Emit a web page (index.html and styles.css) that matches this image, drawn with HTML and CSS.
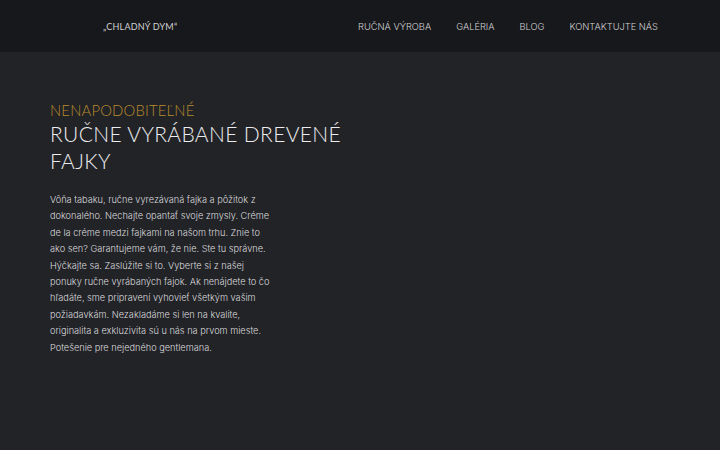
FILE: index.html
```html
<!DOCTYPE html>
<html lang="sk">
<head>
  <meta charset="UTF-8" />
  <meta name="viewport" content="width=device-width, initial-scale=1.0"/>
  <title>Chladný dym</title>
  <link rel="stylesheet" href="styles.css">
</head>
<body>
  <header class="topbar">
    <div class="logo">„CHLADNÝ DYM“</div>
    <nav class="menu">
      <a href="#">Ručná výroba</a>
      <a href="#">Galéria</a>
      <a href="#">Blog</a>
      <a href="#">Kontaktujte nás</a>
    </nav>
  </header>

  <main class="hero">
    <p class="kicker">Nenapodobiteľné</p>
    <h1>Ručne vyrábané drevené fajky</h1>
    <p class="intro">Vôňa tabaku, ručne vyrezávaná fajka a pôžitok z dokonalého. Nechajte opantať svoje zmysly. Créme de la créme medzi fajkami na našom trhu. Znie to ako sen? Garantujeme vám, že nie. Ste tu správne. Hýčkajte sa. Zaslúžite si to. Vyberte si z našej ponuky ručne vyrábaných fajok. Ak nenájdete to čo hľadáte, sme pripravení vyhovieť všetkým vašim požiadavkám. Nezakladáme si len na kvalite, originalita a exkluzivita sú u nás na prvom mieste. Potešenie pre nejedného gentlemana.</p>
  </main>
</body>
</html>
```

FILE: styles.css
```css
body {
  margin: 0;
  padding: 0;
  background: #222327;
  color: #d6d6d8;
  font-family: 'Inter', sans-serif;
  min-height: 450px;
}

.topbar {
  height: 52px;
  background: #17181b;
  display: flex;
  align-items: center;
  justify-content: space-between;
  padding: 0 62px 0 103px;
}

.logo {
  font-family: 'Lato', sans-serif;
  font-size: 9px;
  color: #d0d0d2;
  letter-spacing: 0.2px;
}

.menu {
  display: flex;
  gap: 25px;
}

.menu a {
  color: #d2d2d5;
  text-decoration: none;
  text-transform: uppercase;
  font-size: 9.3px;
  font-weight: 300;
}

.hero {
  padding: 49px 0 0 50px;
}

.kicker {
  margin: 0;
  font-family: 'Lato', sans-serif;
  font-weight: 300;
  font-size: 14.8px;
  letter-spacing: 0.2px;
  color: #b88b2c;
  text-transform: uppercase;
}

.hero h1 {
  margin: 2px 0 0;
  width: 330px;
  font-family: 'Lato', sans-serif;
  font-weight: 300;
  font-size: 21px;
  line-height: 26.5px;
  letter-spacing: 0.35px;
  color: #ececee;
  text-transform: uppercase;
}

.intro {
  margin: 18px 0 0;
  width: 226px;
  font-size: 9.2px;
  font-weight: 300;
  line-height: 16.4px;
  color: #dadadd;
}
```
